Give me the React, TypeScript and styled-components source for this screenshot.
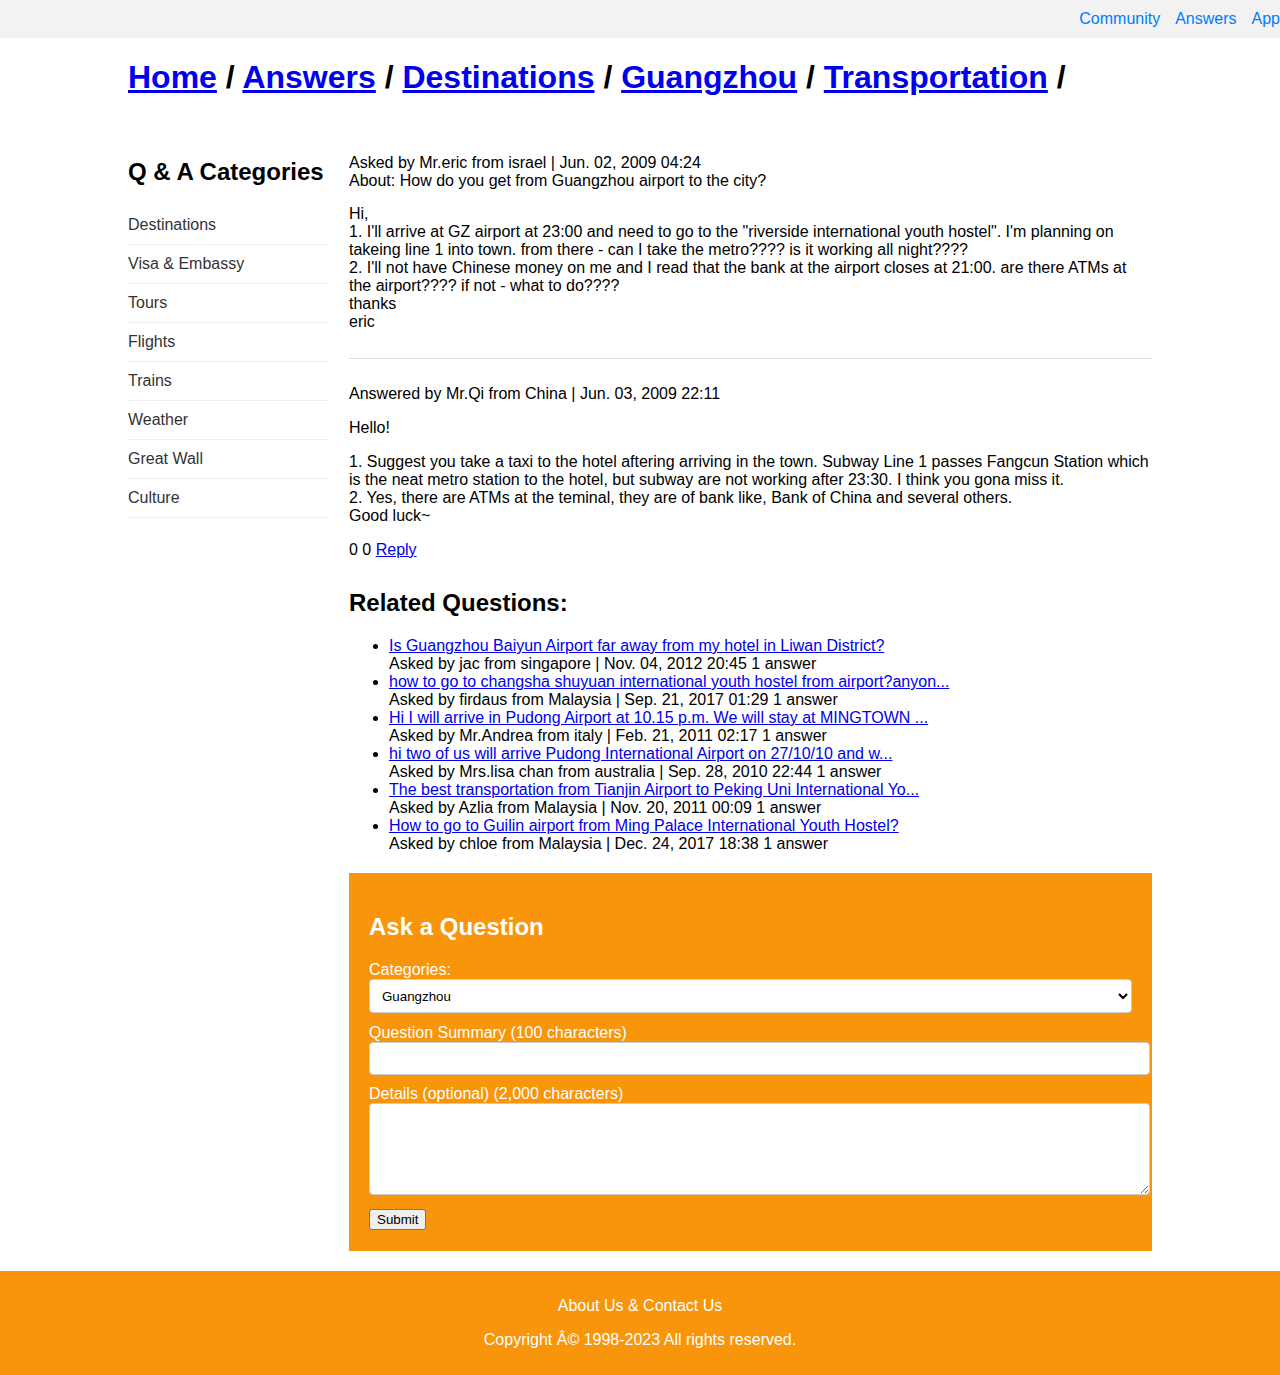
import React from "react";
import styled, { createGlobalStyle } from "styled-components";

const GlobalStyle = createGlobalStyle`
  html, body {
    margin: 0;
    padding: 0;
    background: #ffffff;
    color: #000000;
    font-family: "Liberation Sans", Arial, Helvetica, sans-serif;
    font-size: 16px;
  }
  * { box-sizing: border-box; }
`;

const ORANGE = "#f8950a";

const TopBar = styled.header`
  height: 38px;
  background: #f2f2f2;
  display: flex;
  align-items: center;
  justify-content: flex-end;
  gap: 15px;
  overflow: hidden;
  white-space: nowrap;
`;

const TopLink = styled.a`
  color: #007bff;
  text-decoration: none;
  font-size: 16px;
  line-height: 18px;
`;

const Container = styled.div`
  width: 1024px;
  margin: 0 auto;
`;

const Breadcrumb = styled.h1`
  margin: 21px 0 0;
  font-size: 32px;
  font-weight: bold;
  line-height: normal;
  color: #000;
  a {
    color: #0000ee;
    text-decoration: underline;
  }
`;

const Columns = styled.div`
  display: grid;
  grid-template-columns: 200px 1fr;
  column-gap: 21px;
  margin-top: 43px;
  align-items: start;
`;

const SectionTitle = styled.h2<{ $light?: boolean; $top?: number }>`
  margin: ${(p) => (p.$top ?? 20)}px 0 20px;
  font-size: 24px;
  font-weight: bold;
  line-height: normal;
  color: ${(p) => (p.$light ? "#fff" : "#000")};
`;

const CategoryList = styled.ul`
  list-style: none;
  margin: 0;
  padding: 0;
`;

const CategoryItem = styled.li`
  padding: 10px 0;
  border-bottom: 1px solid #eeeeee;
  line-height: 18px;
  a {
    color: #333333;
    text-decoration: none;
  }
`;

const Main = styled.main`
  padding-top: 15px;
  line-height: 18px;
`;

const Para = styled.p<{ $top?: number }>`
  margin: ${(p) => (p.$top ?? 16)}px 0 16px;
  a {
    color: #0000ee;
    text-decoration: underline;
  }
`;

const QuestionMeta = styled.div`
  line-height: 18px;
`;

const Divider = styled.hr`
  border: 0;
  border-top: 1px solid #dddddd;
  margin: 27px 0 26px;
`;

const RelatedList = styled.ul`
  margin: 0 0 20px;
  padding-left: 40px;
  line-height: 18px;
  a {
    color: #0000ee;
    text-decoration: underline;
  }
`;

const AskBox = styled.form`
  background: ${ORANGE};
  padding: 20px 20px 21px;
  color: #fff;
`;

const FieldLabel = styled.label`
  display: block;
  line-height: 18px;
  color: #fff;
  font-size: 16px;
`;

const Select = styled.select`
  display: block;
  width: 100%;
  height: 34px;
  margin: 0 0 11px;
  padding: 0 8px;
  font-family: "Liberation Sans", Arial, sans-serif;
  font-size: 13.33px;
  color: #000;
  background: #fff;
  border: 1px solid #cccccc;
  border-radius: 4px;
`;

const TextInput = styled.input`
  display: block;
  box-sizing: content-box;
  width: 100%;
  height: 15px;
  margin: 0 0 10px;
  padding: 8px;
  font-family: "Liberation Sans", Arial, sans-serif;
  font-size: 13.33px;
  border: 1px solid #cccccc;
  border-radius: 4px;
  background: #fff;
`;

const TextArea = styled.textarea`
  display: block;
  box-sizing: content-box;
  width: 100%;
  height: 74px;
  margin: 0 0 14px;
  padding: 8px;
  font-family: "Liberation Mono", monospace;
  font-size: 13.33px;
  border: 1px solid #cccccc;
  border-radius: 4px;
  background: #fff;
`;

const SubmitButton = styled.button`
  display: block;
  height: 21px;
  padding: 1px 7px;
  font-family: "Liberation Sans", Arial, sans-serif;
  font-size: 13.33px;
  color: #000;
  background: #efefef;
  border: 1px solid #767676;
  border-radius: 3px;
`;

const Footer = styled.footer`
  margin-top: 20px;
  background: ${ORANGE};
  padding: 10px 0 11px;
  text-align: center;
  color: #fff;
  line-height: 18px;
  p { margin: 16px 0; }
  a { color: #fff; text-decoration: none; }
`;

const categories = [
  "Destinations",
  "Visa & Embassy",
  "Tours",
  "Flights",
  "Trains",
  "Weather",
  "Great Wall",
  "Culture",
];

const related = [
  {
    title: "Is Guangzhou Baiyun Airport far away from my hotel in Liwan District?",
    meta: "Asked by jac from singapore | Nov. 04, 2012 20:45 1 answer",
  },
  {
    title: "how to go to changsha shuyuan international youth hostel from airport?anyon...",
    meta: "Asked by firdaus from Malaysia | Sep. 21, 2017 01:29 1 answer",
  },
  {
    title: "Hi I will arrive in Pudong Airport at 10.15 p.m. We will stay at MINGTOWN ...",
    meta: "Asked by Mr.Andrea from italy | Feb. 21, 2011 02:17 1 answer",
  },
  {
    title: "hi two of us will arrive Pudong International Airport on 27/10/10 and w...",
    meta: "Asked by Mrs.lisa chan from australia | Sep. 28, 2010 22:44 1 answer",
  },
  {
    title: "The best transportation from Tianjin Airport to Peking Uni International Yo...",
    meta: "Asked by Azlia from Malaysia | Nov. 20, 2011 00:09 1 answer",
  },
  {
    title: "How to go to Guilin airport from Ming Palace International Youth Hostel?",
    meta: "Asked by chloe from Malaysia | Dec. 24, 2017 18:38 1 answer",
  },
];

const crumbs = ["Home", "Answers", "Destinations", "Guangzhou", "Transportation"];

export default function App() {
  return (
    <>
      <GlobalStyle />
      <TopBar>
        <TopLink href="#">Community</TopLink>
        <TopLink href="#">Answers</TopLink>
        <TopLink href="#">App</TopLink>
      </TopBar>
      <Container>
        <Breadcrumb>
          {crumbs.map((c) => (
            <React.Fragment key={c}>
              <a href="#">{c}</a> /{" "}
            </React.Fragment>
          ))}
        </Breadcrumb>
        <Columns>
          <aside>
            <SectionTitle $top={19}>Q &amp; A Categories</SectionTitle>
            <CategoryList>
              {categories.map((c) => (
                <CategoryItem key={c}>
                  <a href="#">{c}</a>
                </CategoryItem>
              ))}
            </CategoryList>
          </aside>
          <Main>
            <QuestionMeta>
              Asked by Mr.eric from israel | Jun. 02, 2009 04:24
              <br />
              About: How do you get from Guangzhou airport to the city?
            </QuestionMeta>
            <Para $top={15}>
              Hi,
              <br />
              1. I'll arrive at GZ airport at 23:00 and need to go to the "riverside international youth hostel". I'm planning on takeing line 1 into town. from there - can I take the metro???? is it working all night????
              <br />
              2. I'll not have Chinese money on me and I read that the bank at the airport closes at 21:00. are there ATMs at the airport???? if not - what to do????
              <br />
              thanks
              <br />
              eric
            </Para>
            <Divider />
            <Para>Answered by Mr.Qi from China | Jun. 03, 2009 22:11</Para>
            <Para>Hello!</Para>
            <Para>
              1. Suggest you take a taxi to the hotel aftering arriving in the town. Subway Line 1 passes Fangcun Station which is the neat metro station to the hotel, but subway are not working after 23:30. I think you gona miss it.
              <br />
              2. Yes, there are ATMs at the teminal, they are of bank like, Bank of China and several others.
              <br />
              Good luck~
            </Para>
            <Para>
              0 0 <a href="#">Reply</a>
            </Para>
            <SectionTitle $top={30}>Related Questions:</SectionTitle>
            <RelatedList>
              {related.map((r) => (
                <li key={r.title}>
                  <a href="#">{r.title}</a>
                  <br />
                  {r.meta}
                </li>
              ))}
            </RelatedList>
            <AskBox onSubmit={(e) => e.preventDefault()}>
              <SectionTitle $light>Ask a Question</SectionTitle>
              <FieldLabel htmlFor="cat">Categories:</FieldLabel>
              <Select id="cat" defaultValue="Guangzhou">
                <option>Guangzhou</option>
                <option>Beijing</option>
                <option>Shanghai</option>
              </Select>
              <FieldLabel htmlFor="summary">Question Summary (100 characters)</FieldLabel>
              <TextInput id="summary" type="text" maxLength={100} />
              <FieldLabel htmlFor="details">Details (optional) (2,000 characters)</FieldLabel>
              <TextArea id="details" maxLength={2000} />
              <SubmitButton type="submit">Submit</SubmitButton>
            </AskBox>
          </Main>
        </Columns>
      </Container>
      <Footer>
        <p>
          <a href="#">About Us &amp; Contact Us</a>
        </p>
        <p>Copyright Â© 1998-2023 All rights reserved.</p>
      </Footer>
    </>
  );
}
